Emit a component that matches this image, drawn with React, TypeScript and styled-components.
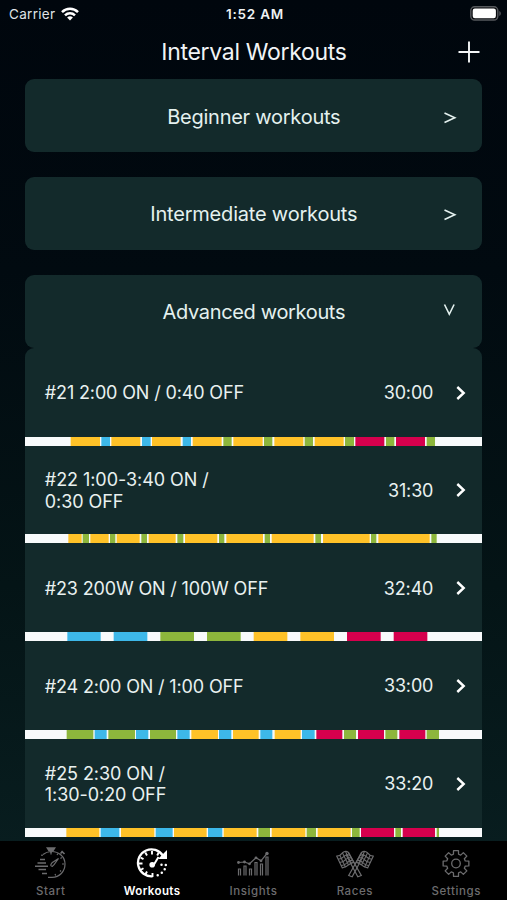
import React from "react";
import styled, { createGlobalStyle } from "styled-components";

const GlobalStyle = createGlobalStyle`
  * { box-sizing: border-box; }
  body { margin: 0; background: #000; }
`;

const sans = `Inter, "Liberation Sans", sans-serif`;

const Screen = styled.div`
  width: 507px;
  height: 900px;
  display: flex;
  flex-direction: column;
  overflow: hidden;
  color: #e9f1f0;
  font-family: ${sans};
  background: linear-gradient(180deg, #00060d 0%, #010a10 30%, #041416 65%, #081d1f 94%);
`;

const StatusBar = styled.header`
  height: 27px;
  flex: none;
  display: grid;
  grid-template-columns: 1fr auto 1fr;
  align-items: center;
  padding: 1px 6px 0 9px;
  font-size: 13.5px;
`;

const Carrier = styled.div`
  display: flex;
  align-items: center;
  gap: 6px;
  font-size: 13.5px;
  letter-spacing: 0.3px;
  color: #dfe3e6;
`;

const Clock = styled.div`
  font-weight: 600;
  letter-spacing: 0.75px;
  color: #eef1f3;
`;

const BatterySlot = styled.div`
  display: flex;
  justify-content: flex-end;
  padding-bottom: 1px;
`;

const TitleBar = styled.div`
  height: 52px;
  flex: none;
  display: grid;
  grid-template-columns: 60px 1fr 60px;
  align-items: center;
  padding: 0 8px 3px 9px;
`;

const Title = styled.h1`
  grid-column: 2;
  margin: 0;
  text-align: center;
  font-size: 23px;
  line-height: 28px;
  font-weight: 400;
  letter-spacing: -0.3px;
  color: #f1f4f6;
`;

const AddButton = styled.button`
  justify-self: center;
  display: flex;
  padding: 0;
  border: 0;
  background: none;
  color: #f4f6f7;
`;

const Content = styled.main`
  flex: 1;
  min-height: 0;
  overflow: hidden;
  padding: 0 24.7px 0 25.3px;
`;

const Sections = styled.div`
  display: flex;
  flex-direction: column;
  gap: 24.6px;
`;

const SectionCard = styled.button`
  height: 73.2px;
  display: grid;
  grid-template-columns: 64px 1fr 64px;
  align-items: center;
  padding: 0;
  border: 0;
  border-radius: 9px;
  background: #132a2b;
  color: #e4f1ef;
  font: 400 20px/26px ${sans};
`;

const SectionName = styled.span<{ $tracking: number }>`
  grid-column: 2;
  padding-top: 2px;
  letter-spacing: ${(p) => p.$tracking}px;
`;

const SectionMark = styled.span<{ $open?: boolean }>`
  display: flex;
  justify-content: center;
  padding-bottom: ${(p) => (p.$open ? 2 : 0)}px;
  padding-top: ${(p) => (p.$open ? 0 : 4)}px;
`;

const WorkoutList = styled.ul`
  margin: 0;
  padding: 0;
  list-style: none;
  border-radius: 9px 9px 0 0;
  background: #132a2b;
`;

const WorkoutItem = styled.li`
  height: 97.75px;
  display: flex;
  flex-direction: column;
`;

const WorkoutInfo = styled.div`
  flex: 1;
  display: flex;
  align-items: center;
  padding: 1px 15px 0 19.5px;
`;

const WorkoutName = styled.div<{ $tracking: number }>`
  flex: 1;
  padding-top: 1px;
  white-space: pre-line;
  font-size: 18px;
  line-height: 21.5px;
  letter-spacing: ${(p) => p.$tracking}px;
`;

const Duration = styled.div`
  margin-right: 22px;
  padding-top: 1px;
  font-size: 18px;
  line-height: 22px;
  letter-spacing: -0.15px;
`;

const Timeline = styled.svg`
  display: block;
  flex: none;
  width: 100%;
  height: 9px;
`;

const TabBar = styled.nav`
  height: 59px;
  flex: none;
  display: grid;
  grid-template-columns: repeat(5, 1fr);
  background: #000;
`;

const Tab = styled.button<{ $active?: boolean }>`
  display: flex;
  flex-direction: column;
  align-items: center;
  padding: 5px 0 0;
  border: 0;
  background: none;
  color: ${(p) => (p.$active ? "#fff" : "#6c6c6e")};
  font: ${(p) => (p.$active ? 600 : 500)} 11.5px/15px ${sans};
  letter-spacing: ${(p) => (p.$active ? 0.4 : 0.6)}px;
`;

const TabLabel = styled.span`
  margin-top: 5px;
`;

const colors = {
  Y: "#ffc228",
  B: "#3db8e9",
  G: "#8db63c",
  R: "#d6004d",
};

type Zone = keyof typeof colors;
type Segment = [Zone, number, number];

const TIMELINE_START = 76;
const TIMELINE_LENGTH = 1371;

interface Workout {
  name: string;
  time: string;
  tracking: number;
  segments: Segment[];
}

const workouts: Workout[] = [
  {
    name: "#21 2:00 ON / 0:40 OFF",
    time: "30:00",
    tracking: -0.14,
    segments: [
      ["Y", 213, 301], ["B", 305, 331], ["Y", 335, 422], ["B", 427, 453], ["Y", 457, 543],
      ["B", 549, 574], ["Y", 579, 666], ["G", 671, 696], ["Y", 701, 789], ["G", 793, 818],
      ["Y", 824, 911], ["G", 915, 940], ["Y", 945, 1032], ["G", 1036, 1063], ["R", 1067, 1154],
      ["G", 1159, 1184], ["R", 1189, 1276], ["G", 1281, 1306],
    ],
  },
  {
    name: "#22 1:00-3:40 ON /\n0:30 OFF",
    time: "31:30",
    tracking: -0.06,
    segments: [
      ["Y", 206, 246], ["G", 249, 268], ["Y", 272, 327], ["G", 331, 347], ["Y", 351, 420],
      ["G", 425, 442], ["Y", 447, 528], ["G", 533, 551], ["Y", 556, 653], ["G", 658, 674],
      ["Y", 680, 790], ["G", 795, 811], ["Y", 816, 942], ["G", 947, 964], ["Y", 970, 1110],
      ["G", 1114, 1130], ["Y", 1136, 1290], ["G", 1295, 1311],
    ],
  },
  {
    name: "#23 200W ON / 100W OFF",
    time: "32:40",
    tracking: -0.16,
    segments: [
      ["B", 203, 303], ["B", 342, 443], ["G", 482, 583], ["G", 622, 723],
      ["Y", 762, 863], ["Y", 902, 1003], ["R", 1042, 1143], ["R", 1182, 1283],
    ],
  },
  {
    name: "#24 2:00 ON / 1:00 OFF",
    time: "33:00",
    tracking: -0.15,
    segments: [
      ["G", 201, 281], ["B", 285, 321], ["G", 326, 406], ["B", 409, 446], ["G", 451, 529],
      ["B", 533, 570], ["Y", 575, 655], ["B", 658, 695], ["Y", 700, 777], ["B", 782, 818],
      ["Y", 825, 903], ["B", 907, 945], ["R", 950, 1028], ["G", 1033, 1069], ["R", 1075, 1153],
      ["G", 1157, 1193], ["R", 1199, 1277], ["G", 1281, 1318],
    ],
  },
  {
    name: "#25 2:30 ON /\n1:30-0:20 OFF",
    time: "33:20",
    tracking: -0.06,
    segments: [
      ["Y", 200, 299], ["B", 303, 359], ["Y", 364, 464], ["B", 468, 519], ["Y", 523, 621],
      ["B", 625, 668], ["Y", 672, 771], ["G", 776, 811], ["Y", 816, 917], ["G", 921, 949],
      ["Y", 954, 1053], ["G", 1057, 1080], ["R", 1084, 1183], ["G", 1187, 1204], ["R", 1209, 1306],
      ["G", 1311, 1318],
    ],
  },
];

const WorkoutTimeline = ({ segments }: { segments: Segment[] }) => (
  <Timeline viewBox={`${TIMELINE_START} 0 ${TIMELINE_LENGTH} 27`} preserveAspectRatio="none">
    <rect x={TIMELINE_START} width={TIMELINE_LENGTH} height="27" fill="#f8fafb" />
    {segments.map(([zone, from, to]) => (
      <rect key={from} x={from} width={to - from} height="27" fill={colors[zone]} />
    ))}
  </Timeline>
);

const WifiIcon = () => (
  <svg width="18" height="14" viewBox="0 0 18 14" fill="none" stroke="#fff" strokeWidth="2.5">
    <path d="M1 5.1C5.5 .6 12.5 .6 17 5.1" />
    <path d="M4 8.3C6.8 5.5 11.2 5.5 14 8.3" />
    <path d="M9 13.6 6.1 10.5Q9 8.2 11.9 10.5Z" fill="#fff" stroke="none" />
  </svg>
);

const BatteryIcon = () => (
  <svg width="31" height="15" viewBox="0 0 31 15">
    <rect x=".8" y=".8" width="27" height="13.2" rx="3.8" fill="#07090c" stroke="#56595d" strokeWidth="1.4" />
    <rect x="2.7" y="2.6" width="23.2" height="9.6" rx="2.2" fill="#fff" />
    <path d="M29.3 5v5c2-.8 2-4.200 0-5Z" fill="#56595d" />
  </svg>
);

const PlusIcon = () => (
  <svg width="22" height="22" viewBox="0 0 22 22" stroke="currentColor" strokeWidth="1.9">
    <path d="M11 .5v21M.5 11h21" />
  </svg>
);

const MoreThanIcon = () => (
  <svg width="14" height="14" viewBox="0 0 14 14" fill="none" stroke="currentColor" strokeWidth="1.6">
    <path d="M1.500 2 11.800 6.800 1.500 11.600" />
  </svg>
);

const OpenIcon = () => (
  <svg width="14" height="14" viewBox="0 0 14 14" fill="none" stroke="currentColor" strokeWidth="1.6">
    <path d="M1.500 1.500 6.300 11.300 11.100 1.500" />
  </svg>
);

const ChevronIcon = () => (
  <svg width="12" height="16" viewBox="0 0 12 16" fill="none" stroke="#fff" strokeWidth="2.4">
    <path d="M2.300 2 8.700 8 2.300 14" />
  </svg>
);

const StartIcon = () => (
  <svg width="32" height="33" viewBox="0 0 32 33" fill="none" stroke="currentColor" strokeWidth="1.200">
    <path d="M8 8.500A14 13.500 0 0 1 16 5.500C24 5.300 30 11 30 18c0 7.500-5.500 13.300-13 13.300H13" />
    <path d="M12.500 2h7l-1.500 2.500h-4ZM16 4v3M26.500 5l3 3M25.500 7.500l2-2M13 2.800h6" strokeWidth="1.700" />
    <path d="M23.500 12.500 17 16.800q-2.600 3 .3 3.600l2-2 4.200-5.900Z" />
    <path d="M7 10v-1.500M5 13.500h5M2.500 17h8.500M0 20.200h13M3.500 23.500h7.500M7 27.500h5" strokeWidth="1.500" />
    <path d="M16 8.500V7M22 9l1-1.500M27 18h2M25 24.500l1 1M20 28l.7 1.500M25.500 12.500l1.300-1" />
  </svg>
);

const WorkoutsIcon = () => (
  <svg width="32" height="33" viewBox="0 0 32 33" fill="none" stroke="currentColor">
    <path d="M16.500 30.300A13.500 13.500 0 1 1 26.800 9.500" strokeWidth="2.300" />
    <path d="M31 4v9h-9Z" fill="currentColor" stroke="none" />
    <path d="M16 5v3.500M9.300 6.500l1.700 3M4.500 11.500l3 1.700M3 17.500h3.500M4.500 24l3-1.800M9.300 28.500l1.700-3M16.500 31v-4M22.700 6.500l-1.500 3" strokeWidth="1.900" />
    <path d="m22.500 11-5 8.200" strokeWidth="2" />
    <circle cx="16.200" cy="18.700" r="2.800" fill="currentColor" stroke="none" />
    <path d="M29.800 19v.01M28.700 23.200v.01M25.800 26.800v.01M21.700 29.300v.01M25.500 18.800v.01" strokeWidth="2.500" strokeLinecap="round" />
  </svg>
);

const InsightsIcon = () => (
  <svg width="34" height="33" viewBox="0 0 34 33" fill="none" stroke="currentColor" strokeWidth="1.200">
    <path d="M2.500 29.500V23h2v6.500M8 29.500V20h2v9.500M13.500 29.500V23h2v6.500M19 29.500V16.500h2v13M24.500 29.500V18h2v11.500M30 29.500V11h2v18.500" />
    <path d="m2.500 16.500 6-.5 5 1.800 6.500-6 5 3L31 7.500" />
    <g fill="currentColor" stroke="none">
      <circle cx="2.500" cy="16.500" r="1.400" /><circle cx="8.500" cy="16" r="1.400" />
      <circle cx="13.500" cy="17.800" r="1.400" /><circle cx="20" cy="11.800" r="1.400" />
      <circle cx="25" cy="14.800" r="1.400" /><circle cx="31" cy="7.500" r="1.700" />
    </g>
  </svg>
);

const RaceFlag = () => (
  <>
    <path d="M12.500 7 25.300 29.500l-3.500 1.200L10.200 9" />
    <path d="M12.500 6.500Q9.500 4.200 6.500 6.800 4 10 .8 10.200l5.500 11.700q4-.5 6.500-3.200 2.500-2.200 5-2.400Z" />
    <path d="M9.500 5.500l6 12.300M6.500 7l6 12M3.800 9.300l5.700 12M2 13.300q4-.3 6.300-3.200Q11 8 14 9.300M3.600 16.500q4-.3 6.300-3.200Q12.500 11 15.400 12M5 19.700q4-.3 6.400-3.200 2.700-2.500 5.500-2" strokeWidth="1.100" />
  </>
);

const RacesIcon = () => (
  <svg width="38" height="33" viewBox="0 0 38 33" fill="none" stroke="currentColor" strokeWidth="1.200">
    <RaceFlag />
    <g transform="translate(38 0) scale(-1 1)"><RaceFlag /></g>
  </svg>
);

const SettingsIcon = () => (
  <svg width="32" height="33" viewBox="0 -1.500 32 33" fill="none" stroke="currentColor" strokeWidth="1.300" strokeLinejoin="round">
    <path d={`M${gearPath}Z`} />
    <circle cx="16" cy="16" r="4.300" />
  </svg>
);

const GEAR_TEETH = 8;

const gearPath = Array.from({ length: GEAR_TEETH }, (_, tooth) => {
  const corners: [number, number][] = [[-0.27, 9.6], [-0.19, 13.1], [0.19, 13.1], [0.27, 9.6]];
  return corners
    .map(([offset, radius]) => {
      const angle = (tooth * 2 * Math.PI) / GEAR_TEETH + offset;
      return `${(16 + radius * Math.sin(angle)).toFixed(2)} ${(16 - radius * Math.cos(angle)).toFixed(2)}`;
    })
    .join(" L");
}).join(" L");

const tabs = [
  { label: "Start", Icon: StartIcon },
  { label: "Workouts", Icon: WorkoutsIcon, active: true },
  { label: "Insights", Icon: InsightsIcon },
  { label: "Races", Icon: RacesIcon },
  { label: "Settings", Icon: SettingsIcon },
];

const sections = [
  { name: "Beginner workouts", tracking: -0.25 },
  { name: "Intermediate workouts", tracking: -0.2 },
  { name: "Advanced workouts", tracking: -0.34, open: true },
];

export default function App() {
  return (
    <Screen>
      <GlobalStyle />
      <StatusBar>
        <Carrier>Carrier <WifiIcon /></Carrier>
        <Clock>1:52 AM</Clock>
        <BatterySlot><BatteryIcon /></BatterySlot>
      </StatusBar>
      <TitleBar>
        <Title>Interval Workouts</Title>
        <AddButton aria-label="Add workout"><PlusIcon /></AddButton>
      </TitleBar>
      <Content>
        <Sections>
          {sections.map(({ name, tracking, open }) => (
            <SectionCard key={name}>
              <SectionName $tracking={tracking}>{name}</SectionName>
              <SectionMark $open={open}>{open ? <OpenIcon /> : <MoreThanIcon />}</SectionMark>
            </SectionCard>
          ))}
        </Sections>
        <WorkoutList>
          {workouts.map((workout) => (
            <WorkoutItem key={workout.name}>
              <WorkoutInfo>
                <WorkoutName $tracking={workout.tracking}>{workout.name}</WorkoutName>
                <Duration>{workout.time}</Duration>
                <ChevronIcon />
              </WorkoutInfo>
              <WorkoutTimeline segments={workout.segments} />
            </WorkoutItem>
          ))}
        </WorkoutList>
      </Content>
      <TabBar>
        {tabs.map(({ label, Icon, active }) => (
          <Tab key={label} $active={active}>
            <Icon />
            <TabLabel>{label}</TabLabel>
          </Tab>
        ))}
      </TabBar>
    </Screen>
  );
}
